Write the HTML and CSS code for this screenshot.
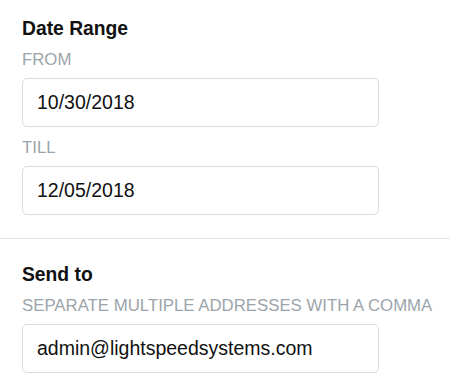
FILE: index.html
```html
<!DOCTYPE html>
<html lang="en">
<head>
    <meta charset="UTF-8">
    <meta name="viewport" content="width=device-width, initial-scale=1.0">
    <title>Report Settings</title>
    <link rel="stylesheet" href="styles.css">
</head>
<body>

    <div class="section">
        <h3 class="section-title">Date Range</h3>
        <label class="field-label" for="from-date">FROM</label>
        <input type="text" id="from-date" class="field-input" value="10/30/2018" />
        <label class="field-label" for="till-date">TILL</label>
        <input type="text" id="till-date" class="field-input" value="12/05/2018" />
    </div>

    <div class="section">
        <h3 class="section-title">Send to</h3>
        <label class="field-label" for="send-to">SEPARATE MULTIPLE ADDRESSES WITH A COMMA</label>
        <input type="text" id="send-to" class="field-input" value="admin@lightspeedsystems.com" />
    </div>

</body>
</html>
```

FILE: styles.css
```css
body {
    font-family: 'Liberation Sans', Arial, sans-serif;
    background: #fff;
    margin: 0;
    color: #111;
}

.section {
    padding: 17px 0 23px 22px;
    display: flex;
    flex-direction: column;
    align-items: flex-start;
}

.section + .section {
    border-top: 1px solid #e6e6e6;
    padding-top: 24px;
}

.section-title {
    margin: 0;
    font-size: 19.3px;
    font-weight: bold;
    line-height: 24px;
}

.field-label {
    margin: 12px 0 9px;
    font-size: 16.8px;
    line-height: 18px;
    color: #9ba4ab;
    white-space: nowrap;
}

.section-title + .field-label {
    margin-top: 10px;
}

.field-input {
    width: 357px;
    height: 49px;
    padding: 0 14px;
    border: 1px solid #dcdcdc;
    border-radius: 5px;
    box-sizing: border-box;
    font-family: inherit;
    font-size: 19.5px;
    color: #111;
    outline: none;
}
```
